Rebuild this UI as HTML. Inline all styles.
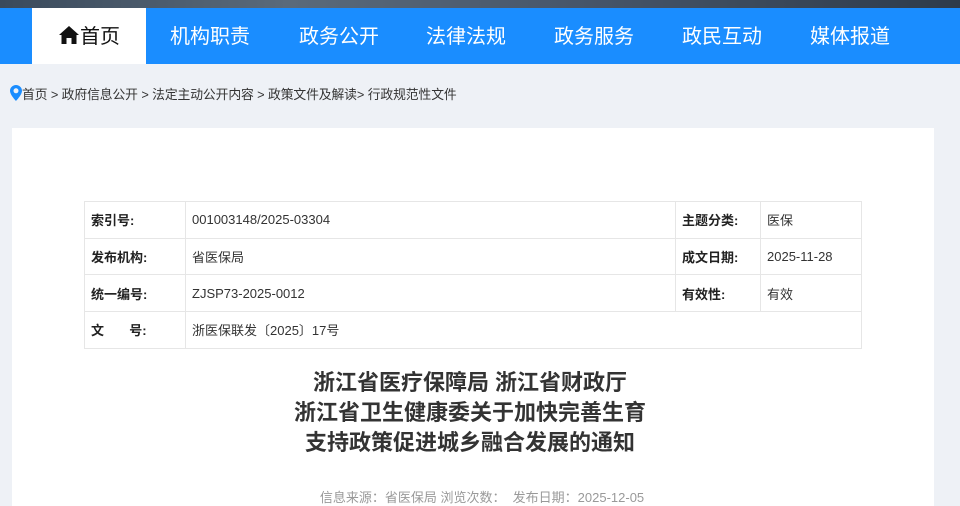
<!DOCTYPE html>
<html><head><meta charset="utf-8"><style>
*{margin:0;padding:0;box-sizing:border-box}
body{width:960px;height:506px;overflow:hidden;background:#eef1f6;font-family:"Liberation Sans","Noto Sans CJK SC",sans-serif;position:relative}
.top{position:absolute;left:0;top:0;width:960px;height:8px;background:linear-gradient(90deg,#3a4a5c,#5a6a7a 30%,#47566a 60%,#2e3b4a)}
.nav{position:absolute;left:0;top:8px;width:960px;height:56px;background:#1a8dff}
.nav div{position:absolute;top:0;height:56px;line-height:58px;color:#fff;font-size:20px;text-align:center;width:128px;margin-left:-64px}
.nav .home{left:32px;width:114px;margin:0;background:#fff;color:#111}
.crumb{position:absolute;left:10px;top:84px;font-size:12.8px;color:#333;letter-spacing:-0.1px}
.panel{position:absolute;left:12px;top:128px;width:922px;height:378px;background:#fff}
table{position:absolute;left:84px;top:201px;width:778px;border-collapse:collapse;font-size:13px;color:#333}
td{border:1px solid #e6e6e6;height:36.7px;padding-left:6px}
td.b{font-weight:bold;color:#222}
.title{position:absolute;left:-10px;width:960px;top:368px;text-align:center;font-size:22px;font-weight:bold;line-height:30px;color:#333}
.meta{position:absolute;left:2px;width:960px;top:487px;text-align:center;font-size:13px;color:#999}
</style></head><body>
<div class="top"></div>
<div class="nav">
<div class="home"><svg width="22" height="20" viewBox="0 0 22 20" style="vertical-align:-2px"><path d="M11 1 L1 10 L3.5 10 L3.5 19 L8.5 19 L8.5 13 L13.5 13 L13.5 19 L18.5 19 L18.5 10 L21 10 Z" fill="#111"/></svg>首页</div>
<div style="left:210px">机构职责</div>
<div style="left:339px">政务公开</div>
<div style="left:466px">法律法规</div>
<div style="left:594px">政务服务</div>
<div style="left:722px">政民互动</div>
<div style="left:850px">媒体报道</div>
</div>
<div class="crumb"><svg width="12" height="16" viewBox="0 0 12 16" style="vertical-align:-2px"><path d="M6 0C2.7 0 0 2.6 0 5.8 0 10 6 16 6 16s6-6 6-10.2C12 2.6 9.3 0 6 0zm0 8.3a2.5 2.5 0 1 1 0-5 2.5 2.5 0 0 1 0 5z" fill="#1a8dff"/></svg>首页 &gt; 政府信息公开 &gt; 法定主动公开内容 &gt; 政策文件及解读&gt; 行政规范性文件</div>
<div class="panel"></div>
<table>
<tr><td class="b" style="width:101px">索引号:</td><td style="width:490px">001003148/2025-03304</td><td class="b" style="width:85px">主题分类:</td><td>医保</td></tr>
<tr><td class="b">发布机构:</td><td>省医保局</td><td class="b">成文日期:</td><td>2025-11-28</td></tr>
<tr><td class="b">统一编号:</td><td>ZJSP73-2025-0012</td><td class="b">有效性:</td><td>有效</td></tr>
<tr><td class="b">文&nbsp;&nbsp;&nbsp;&nbsp;&nbsp;&nbsp;&nbsp;号:</td><td colspan="3">浙医保联发〔2025〕17号</td></tr>
</table>
<div class="title">浙江省医疗保障局 浙江省财政厅<br>浙江省卫生健康委关于加快完善生育<br>支持政策促进城乡融合发展的通知</div>
<div class="meta">信息来源：省医保局 浏览次数：&nbsp; 发布日期：2025-12-05</div>
</body></html>
